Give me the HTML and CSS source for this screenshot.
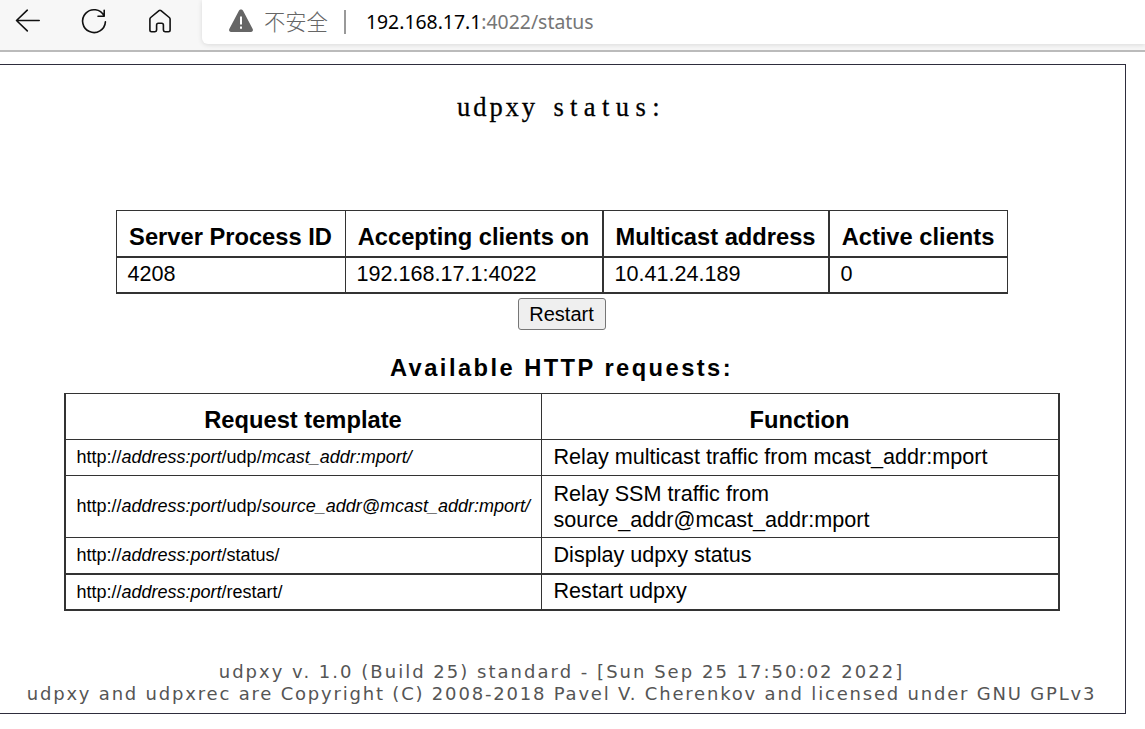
FILE: index.html
```
<!DOCTYPE html>
<html lang="en">
<head>
  <meta charset="UTF-8" />
  <meta name="viewport" content="width=device-width, initial-scale=1.0" />
  <title>udpxy status</title>
  <link rel="stylesheet" href="styles.css">
</head>
<body>

<!-- Browser toolbar -->
<div class="toolbar">
  <div class="nav">
    <svg class="icon" width="28" height="28" viewBox="0 0 28 28"><path d="M25.200 13.500H2.500M13.300 3.200L2.500 13.500l10.800 10.400" /></svg>
    <svg class="icon" width="28" height="28" viewBox="0 0 28 28"><path d="M24.100 8.800A11.400 11.400 0 1 0 25.400 14.900M24.200 3.300v5.900h-6.200" /></svg>
    <svg class="icon" width="28" height="28" viewBox="0 0 28 28"><path d="M3.900 12.300c0-.7.3-1.3.8-1.8L13 3.700c.6-.5 1.400-.5 2 0L23.300 10.500c.5.5.8 1.100.8 1.800V23c0 1-.7 1.700-1.700 1.700H19c-.9 0-1.600-.7-1.600-1.600V18c0-1-.7-1.700-1.700-1.700h-3.400c-1 0-1.700.7-1.700 1.700V23.100c0 .9-.7 1.600-1.600 1.600H5.600c-1 0-1.700-.7-1.700-1.700z" /></svg>
  </div>
  <div class="address">
    <svg class="warning" width="26" height="24" viewBox="0 0 26 24"><path d="M10.900 1.700c.9-1.700 3.300-1.700 4.200 0L24.700 20c.8 1.500-.2 3-1.900 3H3.200c-1.700 0-2.700-1.500-1.900-3z" fill="#666" /><path d="M12 7.500h2v8h-2zM12 17.500h2v2.200h-2z" fill="#fff" /></svg>
    <span class="insecure">不安全</span>
    <span class="divider"></span>
    <span class="url"><span class="host">192.168.17.1</span>:4022/status</span>
  </div>
</div>

<div class="page">
  <h1><span>udpxy</span> <span class="wide">status:</span></h1>

  <table class="clients">
    <colgroup><col class="pid"><col class="accept"><col class="mcast"><col class="active"></colgroup>
    <tr><th>Server Process ID</th><th class="thick">Accepting clients on</th><th class="thick">Multicast address</th><th>Active clients</th></tr>
    <tr><td>4208</td><td class="thick">192.168.17.1:4022</td><td class="thick">10.41.24.189</td><td>0</td></tr>
  </table>

  <button>Restart</button>

  <h3>Available HTTP requests:</h3>

  <table class="requests">
    <colgroup><col class="template"><col class="function"></colgroup>
    <tr><th>Request template</th><th class="thick">Function</th></tr>
    <tr><td><small>http://<i>address:port</i>/udp/<i>mcast_addr:mport/</i></small></td><td class="thick">Relay multicast traffic from mcast_addr:mport</td></tr>
    <tr class="tall"><td><small>http://<i>address:port</i>/udp/<i>source_addr@mcast_addr:mport/</i></small></td><td class="thick">Relay SSM traffic from source_addr@mcast_addr:mport</td></tr>
    <tr class="heavy"><td><small>http://<i>address:port</i>/status/</small></td><td class="thick">Display udpxy status</td></tr>
    <tr class="heavy last"><td><small>http://<i>address:port</i>/restart/</small></td><td class="thick">Restart udpxy</td></tr>
  </table>

  <div class="footer">
    <div class="build">udpxy v. 1.0 (Build 25) standard - [Sun Sep 25 17:50:02 2022]</div>
    <div class="copyright">udpxy and udpxrec are Copyright (C) 2008-2018 Pavel V. Cherenkov and licensed under GNU GPLv3</div>
  </div>
</div>

</body>
</html>
```
FILE: styles.css
```
* {
  box-sizing: border-box;
}
body {
  margin: 0;
  background: #fff;
  color: #000;
  font-family: "Liberation Sans", Arial, sans-serif;
  overflow: hidden;
}

/* toolbar */
.toolbar {
  display: flex;
  height: 52px;
  background: #f7f7f7;
  border-bottom: 2px solid #bbb;
}
.nav {
  display: flex;
  gap: 38px;
  width: 202px;
  padding: 7px 0 0 14px;
}
.icon {
  fill: none;
  stroke: #111;
  stroke-width: 1.6;
  stroke-linecap: round;
  stroke-linejoin: round;
}
.address {
  flex: 1;
  display: flex;
  align-items: center;
  height: 44px;
  padding: 0 0 2px 26px;
  background: #fff;
  border-bottom-left-radius: 6px;
  box-shadow: 0 1px 5px rgba(0, 0, 0, 0.12);
  font-family: "Noto Sans", "Noto Sans CJK SC", sans-serif;
  font-size: 19.4px;
  color: #767676;
  white-space: nowrap;
  clip-path: inset(0 0 -6px -6px);
}
.warning {
  margin-top: -1px;
}
.insecure {
  margin: -2px 0 0 10px;
  font-family: "Noto Sans CJK SC", sans-serif;
  font-size: 21.3px;
  font-weight: 300;
  color: #666;
}
.divider {
  width: 2px;
  height: 24px;
  margin: 2px 0 0 16px;
  background: #999;
}
.url {
  margin-left: 20px;
}
.host {
  color: #000;
}

/* status page */
.page {
  display: flex;
  flex-direction: column;
  align-items: center;
  width: 1126px;
  height: 650px;
  margin-top: 12px;
  padding-right: 2px;
  border: 1px solid #2e2d3d;
  border-left: none;
}
h1 {
  margin: 27px 0 0;
  height: 118px;
  font: 400 26.5px/30px "Liberation Serif", serif;
  letter-spacing: 2.9px;
  word-spacing: 6px;
  -webkit-text-stroke: 0.3px #000;
}
.wide {
  letter-spacing: 6.4px;
}
table {
  table-layout: fixed;
  border-spacing: 0;
  border: 0 solid #333;
  border-top-width: 1px;
  border-left-width: 1px;
  font-size: 21.6px;
  line-height: 26px;
}
th, td {
  height: 36px;
  padding: 0 0 2px 11px;
  border: 0 solid #333;
  border-right-width: 1px;
  border-bottom-width: 1px;
  text-align: left;
}
th {
  height: 46px;
  padding: 7px 0 0;
  font-size: 23.7px;
  text-align: center;
}
.thick {
  border-right-width: 2px;
}
.clients {
  width: 892px;
}
.clients th {
  height: 47px;
}
.clients th, .clients td {
  border-bottom-width: 2px;
}
.pid { width: 229px; }
.accept { width: 258px; }
.mcast { width: 226px; }
.active { width: 178px; }
button {
  width: 88px;
  height: 32px;
  margin: 4px 0 0;
  padding: 0;
  background: #efefef;
  border: 1px solid #767676;
  border-radius: 3px;
  font: 20px "Liberation Sans", Arial, sans-serif;
}
h3 {
  margin: 23px 0 0;
  height: 40px;
  font-size: 23.7px;
  line-height: 30px;
  letter-spacing: 2.45px;
}
.requests {
  width: 996px;
  border-left-width: 2px;
}
.template { width: 476px; }
.function { width: 518px; }
.requests .thick:not(th) {
  padding-left: 12px;
  padding-right: 100px;
}
.requests tr:nth-child(2) .thick {
  padding-right: 0;
}
.requests .tall td {
  height: 62px;
}
.requests .tall .thick {
  padding-bottom: 0;
}
.requests .heavy td {
  height: 37px;
  border-bottom-width: 2px;
}
.requests .last td {
  height: 36px;
}
small {
  font-size: 18px;
}
.footer {
  margin-top: 50px;
  color: #555;
  font: 18px/22px "DejaVu Sans", Verdana, sans-serif;
  letter-spacing: 1.8px;
  text-align: center;
  white-space: nowrap;
}
.build {
  letter-spacing: 2.02px;
}
```
